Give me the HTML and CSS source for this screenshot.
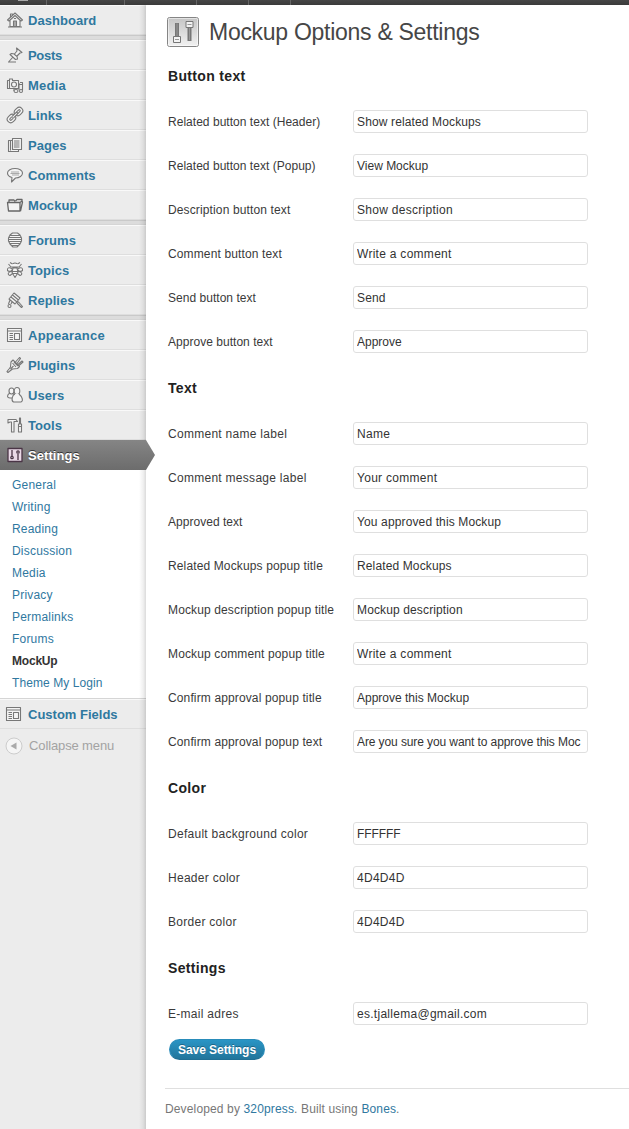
FILE: index.html
```html
<!DOCTYPE html>
<html lang="en">
<head>
<meta charset="utf-8">
<title>Mockup Options &amp; Settings</title>
<link rel="stylesheet" href="styles.css">
</head>
<body>
<header class="adminbar"><i class="logo"></i><i class="b1"></i><i class="b2"></i><i class="b3"></i><i class="b4"></i><i class="b5"></i></header>
<div class="layout">
<nav class="sidebar">
  <ul class="menu">
    <li class="item"><svg class="icon" viewBox="0 0 18 18"><path d="M1.500 9 9 2 16.500 9 15 10 9 4.500 3 10zM4 9v6.500h10V9M4.500 6V3h2v1.500M7.500 15.500V10h3v5.500M9 10v5M8 7.500h2M2 16h14"/></svg><a>Dashboard</a></li>
    <li class="separator"></li>
    <li class="item"><svg class="icon" viewBox="0 0 18 18"><path d="m10.500 2 5.500 4.500-2 .5-3 3 .5 3-2 .5L4 8.500l1.500-1L8.500 8l2.500-3zM7 11l-4 4.500M2 16h8M8 8l3 2.500"/></svg><a class="tight">Posts</a></li>
    <li class="item"><svg class="icon" viewBox="0 0 18 18"><path d="M1.500 4.500h2V3h3v1.500h6v8h-11zM14 6.500h2.500v8M12.500 8.500h4M13 7v7"/><circle cx="8" cy="8.500" r="2.500"/><path d="M3.500 5v7M8 12.500V15"/><ellipse cx="10" cy="15" rx="2" ry="1.500"/><ellipse cx="15" cy="15" rx="1.500" ry="1.500"/></svg><a class="wide">Media</a></li>
    <li class="item"><svg class="icon" viewBox="0 0 18 18"><g transform="rotate(-45 9 9)"><rect x="-0.500" y="5.500" width="9" height="7" rx="3.500"/><rect x="9.500" y="5.500" width="9" height="7" rx="3.500"/><rect x="2" y="8" width="4" height="2" rx="1"/><rect x="12" y="8" width="4" height="2" rx="1"/><path d="M6 8h6v2H6"/></g></svg><a>Links</a></li>
    <li class="item"><svg class="icon" viewBox="0 0 18 18"><path d="M6.500 2.500h9v11h-9zM6 4.500H2.500v11h10V14M4.500 5v9.500M8 5h5.500M8 7h5.500M8 9h5.500M8 11h5.500"/></svg><a>Pages</a></li>
    <li class="item"><svg class="icon" viewBox="0 0 18 18"><path d="M9 2.500c4 0 7.500 1.800 7.500 4.500s-3 5-7 5L5.500 16 6 11.500C3.500 10.800 1.500 9 1.500 7c0-2.700 3.500-4.500 7.500-4.500z"/><path class="soft" d="M5 6h8M4.500 7.500h9M6 9h7"/></svg><a>Comments</a></li>
    <li class="item"><svg class="icon dark" viewBox="0 0 18 18"><path d="M1.500 6.500h12.500V15H2.500zM3 6V4h5l1 1.500M9.500 5l1.500-1.500h5V5M14 6.500l2-1.500.500 1L14.500 15"/></svg><a>Mockup</a></li>
    <li class="separator"></li>
    <li class="item"><svg class="icon" viewBox="0 0 18 18"><path d="M6.500 2h5l2.500 2 1.500 3v3L14 13l-3 3H7l-3-3-1.500-3V7L4 4zM4 4.500h10M3 6.500h12M2.500 8.500h13M3 10.500h12M4 12.500h10M6 14.500h6"/></svg><a>Forums</a></li>
    <li class="item"><svg class="icon" viewBox="0 0 18 18"><circle cx="9" cy="4.500" r="2.500"/><path d="M6.500 3 4 1.500M2.500 3 5 6h8l2.500-3M11.500 3 14 1.500M7 7h4l1 4-1.500 3L9 16.500 7.500 14 6 11zM6 8C3 5.500 1 7 1.500 9.500 3 11 5 10.500 6 9M12 8c3-2.500 5-1 4.500 1.500-1.500 1.500-3.500 1-4.500-.5M6 10.500c-4 0-5 3-2 4l2.500-2M12 10.500c4 0 5 3 2 4l-2.500-2M6.500 10.500h5M7 12.500h4"/></svg><a>Topics</a></li>
    <li class="item"><svg class="icon" viewBox="0 0 18 18"><path d="m8 2 6 5-5 6-6-5zM6.500 4l6 5M5 6l6 5M11.500 10.500l1.500 1 3.500 4-1 1-4-4-.5-1M4 9l-1.500 4M6 11l-1 2"/><circle cx="3.500" cy="15" r="1.500"/></svg><a>Replies</a></li>
    <li class="separator"></li>
    <li class="item"><svg class="icon" viewBox="0 0 18 18"><path d="M1.500 2.500h14v13h-14zM1.500 5h14M8.500 7.500h5v6h-5zM3.500 7.500H7M3.500 9.500H7M3.500 11.500H7M3.500 13.500H7"/></svg><a class="wide">Appearance</a></li>
    <li class="item"><svg class="icon" viewBox="0 0 18 18"><path d="m7 4 6.500 6.500-2 2-5 .5-2 1.500L2 16.500l-1-1L3 13l1.500-2L5 6zM9.500 6l4-4.500 1 1-3.500 5M12 8.500l4-3.500 1 1-4.500 4M6.500 7l3.500 4M8 6l4 4M4.500 13l3-3"/></svg><a>Plugins</a></li>
    <li class="item"><svg class="icon" viewBox="0 0 18 18"><path d="M4 7c-3 1.500-3.500 5 0 5h3M7 8l2 1"/><ellipse cx="5.500" cy="5" rx="2.500" ry="3"/><ellipse cx="11" cy="5" rx="2.800" ry="3.500"/><path d="M9 8c-3 1-4 7-1.500 8H15c2.500-1 1.500-5-2-8"/></svg><a>Users</a></li>
    <li class="item"><svg class="icon" viewBox="0 0 18 18"><path d="M2 3.500h8l1.500 2H8v10.500H5.500V6H4L2 7zM13.500 2h1v6h-1zM12.500 8h3v8h-3zM12.500 10.500h3"/></svg><a>Tools</a></li>
    <li class="item current"><svg class="icon settings" viewBox="0 0 18 18"><path class="plate" d="M2 2.500h14v13H2z"/><path d="M6 4v6M12 8v6"/><circle cx="6" cy="11.500" r="1.200"/><circle cx="12" cy="6" r="1.200"/></svg><a>Settings</a><svg class="arrow" viewBox="0 0 9 30"><defs><linearGradient id="g" x2="0" y2="1"><stop stop-color="#858585"/><stop offset="1" stop-color="#6c6c6c"/></linearGradient></defs><path fill="url(#g)" d="M0 0 9 15 0 30z"/></svg></li>
  </ul>
  <ul class="submenu">
    <li>General</li><li>Writing</li><li>Reading</li><li>Discussion</li><li>Media</li><li>Privacy</li><li>Permalinks</li><li>Forums</li><li class="active">MockUp</li><li class="last">Theme My Login</li>
  </ul>
  <ul class="menu">
    <li class="item custom"><svg class="icon" viewBox="0 0 18 18"><path d="M1.500 2.500h14v13h-14zM1.500 5h14M8.500 7.500h5v6h-5zM3.500 7.500H7M3.500 9.500H7M3.500 11.500H7M3.500 13.500H7"/></svg><a>Custom Fields</a></li>
  </ul>
  <div class="collapse"><svg viewBox="0 0 18 18"><circle cx="9" cy="9" r="8" fill="#f5f5f5" stroke="#ccc"/><path fill="#aaa" d="M11.500 5.500v7L5.500 9z"/></svg><span>Collapse menu</span></div>
</nav>
<main class="content">
  <div class="titlebar">
    <svg viewBox="0 0 32 31"><defs><linearGradient id="p" x2="0" y2="1"><stop stop-color="#c6c6c6"/><stop offset="1" stop-color="#f0f0f0"/></linearGradient></defs><rect x="0.500" y="0.500" width="31" height="29" rx="2" fill="#fff" stroke="#858585"/><rect x="1.500" y="1.500" width="29" height="27" fill="url(#p)"/><path stroke="#777" stroke-width="4" d="M10 6v15M22.500 9v15"/><path stroke="#999" stroke-width="1" d="M10 6.500v13M22.500 10v13"/><path fill="#f3f3f3" stroke="#777" d="M6.500 19.500h7v6h-7zM19 4.500h7v6h-7z"/><path stroke="#999" d="M8 22.500h4M20.500 7.500h4"/></svg>
    <h1>Mockup Options &amp; Settings</h1>
  </div>
  <form>
    <h2>Button text</h2>
    <label class="row"><span class="snug">Related button text (Header)</span><input value="Show related Mockups"></label>
    <label class="row"><span class="snug">Related button text (Popup)</span><input class="snug" value="View Mockup"></label>
    <label class="row"><span>Description button text</span><input class="wide" value="Show description"></label>
    <label class="row"><span>Comment button text</span><input class="wide" value="Write a comment"></label>
    <label class="row"><span class="snug">Send button text</span><input value="Send"></label>
    <label class="row"><span class="snug">Approve button text</span><input class="snug" value="Approve"></label>
    <h2>Text</h2>
    <label class="row"><span class="wide">Comment name label</span><input class="wide" value="Name"></label>
    <label class="row"><span class="wide">Comment message label</span><input class="wide" value="Your comment"></label>
    <label class="row"><span class="snug">Approved text</span><input value="You approved this Mockup"></label>
    <label class="row"><span>Related Mockups popup title</span><input value="Related Mockups"></label>
    <label class="row"><span>Mockup description popup title</span><input value="Mockup description"></label>
    <label class="row"><span>Mockup comment popup title</span><input class="wide" value="Write a comment"></label>
    <label class="row"><span>Confirm approval popup title</span><input class="snug" value="Approve this Mockup"></label>
    <label class="row"><span>Confirm approval popup text</span><input class="tight" value="Are you sure you want to approve this Moc"></label>
    <h2>Color</h2>
    <label class="row"><span class="wide">Default background color</span><input class="tight" value="FFFFFF"></label>
    <label class="row"><span class="wide">Header color</span><input class="wide" value="4D4D4D"></label>
    <label class="row"><span class="wide">Border color</span><input class="wide" value="4D4D4D"></label>
    <h2>Settings</h2>
    <label class="row"><span class="wide">E-mail adres</span><input class="wide" value="es.tjallema@gmail.com"></label>
    <button class="save" type="button">Save Settings</button>
  </form>
  <footer class="credits">Developed by <a>320press</a>. Built using <a>Bones</a>.</footer>
</main>
</div>
</body>
</html>
```
FILE: styles.css
```css
* { box-sizing: border-box; }
body { margin: 0; background: #fff; color: #3a3a3a; font: 12px "Liberation Sans", Arial, sans-serif; height: 1129px; overflow: hidden; }
ul { list-style: none; margin: 0; padding: 0; }

.adminbar { height: 5px; display: flex; background: linear-gradient(#464646, #3a3a3a); overflow: hidden; }
.adminbar i { border-right: 1px solid #666; height: 5px; }
.adminbar .logo { width: 10px; height: 1px; margin-left: 18px; border: 0; background: #aaa; }
.b1 { width: 19px; }
.b2 { width: 78px; }
.b3 { width: 72px; }
.b4 { width: 52px; }
.b5 { width: 42px; }

.layout { display: flex; height: 1124px; }
.sidebar { position: relative; width: 146px; flex: none; background: #ececec; }
.sidebar::after { content: ""; position: absolute; top: 0; right: 0; bottom: 0; width: 7px; background: linear-gradient(90deg, rgba(0,0,0,0), rgba(0,0,0,.06) 60%, rgba(0,0,0,.14)); }
.item { height: 30px; display: flex; align-items: center; gap: 4px; padding: 0 0 0 6px; border-top: 1px solid #f9f9f9; border-bottom: 1px solid #dedede; color: #2f789f; font-size: 13px; font-weight: bold; letter-spacing: .05px; white-space: nowrap; }
.item a { padding-top: 1px; }
.item .wide { letter-spacing: .25px; }
.item .tight { letter-spacing: -.3px; }
.icon { width: 18px; height: 18px; margin-top: -1px; fill: #f4f4f4; stroke: #777; stroke-width: 1.1; stroke-linejoin: round; }
.icon .soft { stroke: #aaa; }
.icon.dark { stroke: #666; stroke-width: 1.3; }
.separator { height: 5px; background: #dcdcdc; border-top: 1px solid #c9c9c9; border-bottom: 1px solid #d5d5d5; }
.current { position: relative; background: linear-gradient(#858585, #6c6c6c); border: 0; padding: 0 0 0 6px; color: #fff; text-shadow: 0 -1px 0 #333; z-index: 1; }
.current .settings { margin-top: 0; stroke: #4a3546; stroke-width: 1.3; fill: #f6edf4; }
.settings .plate { fill: #ead9e7; }
.arrow { position: absolute; left: 146px; top: 0; width: 9px; height: 30px; }

.submenu { height: 229px; padding: 4px 0 0 12px; background: #fff; border-bottom: 1px solid #d5d5d5; color: #2f789f; }
.submenu li { height: 22px; line-height: 22px; letter-spacing: .2px; }
.submenu .active { color: #333; font-weight: bold; letter-spacing: -.2px; }
.submenu .last { letter-spacing: .08px; }
.custom .icon { margin-left: -1px; margin-right: 1px; }
.custom a { letter-spacing: 0; }
.collapse { display: flex; align-items: center; gap: 6px; height: 33px; padding-left: 5px; color: #a3a3a3; font-size: 13px; letter-spacing: -.12px; }
.collapse svg { width: 18px; height: 18px; }

.content { flex: 1; min-width: 0; padding-left: 19px; }
.titlebar { display: flex; align-items: center; gap: 10px; height: 47px; padding: 8px 0 0 2px; }
.titlebar svg { width: 32px; height: 31px; }
h1 { margin: 0; color: #464646; font-size: 23px; font-weight: normal; letter-spacing: -.28px; white-space: nowrap; }
form { padding-left: 3px; }
h2 { height: 48px; margin: 0; line-height: 48px; color: #222; font-size: 14px; letter-spacing: .33px; }
.row { display: grid; grid-template-columns: 185px 235px; align-items: start; height: 44px; padding-top: 10px; line-height: 23px; letter-spacing: .13px; white-space: nowrap; }
.row span { padding-top: 1px; }
.row .snug { letter-spacing: .03px; }
.row .wide { letter-spacing: .28px; }
.row .tight { letter-spacing: -.1px; }
.row input { width: 235px; height: 23px; margin: 0; padding: 1px 3px; border: 1px solid #dfdfdf; border-radius: 3px; background: #fff; color: #333; font: inherit; line-height: 19px; letter-spacing: .13px; }
.row input.snug { letter-spacing: 0; }
.row input.wide { letter-spacing: .28px; }
.row input.tight { letter-spacing: -.1px; }
.save { display: block; width: 96px; height: 21px; margin: 3px 0 0 1px; padding: 0; border: 1px solid #298cba; border-bottom-color: #1f6f94; border-radius: 11px; background: linear-gradient(#2a95c5, #21759b); color: #fff; font: bold 12px "Liberation Sans", Arial, sans-serif; letter-spacing: -.05px; text-shadow: 0 -1px 0 rgba(0,0,0,.3); }
.credits { margin-top: 28px; padding-top: 11px; border-top: 1px solid #dfdfdf; color: #777; line-height: 18px; letter-spacing: .14px; }
.credits a { color: #2f789f; }
```
